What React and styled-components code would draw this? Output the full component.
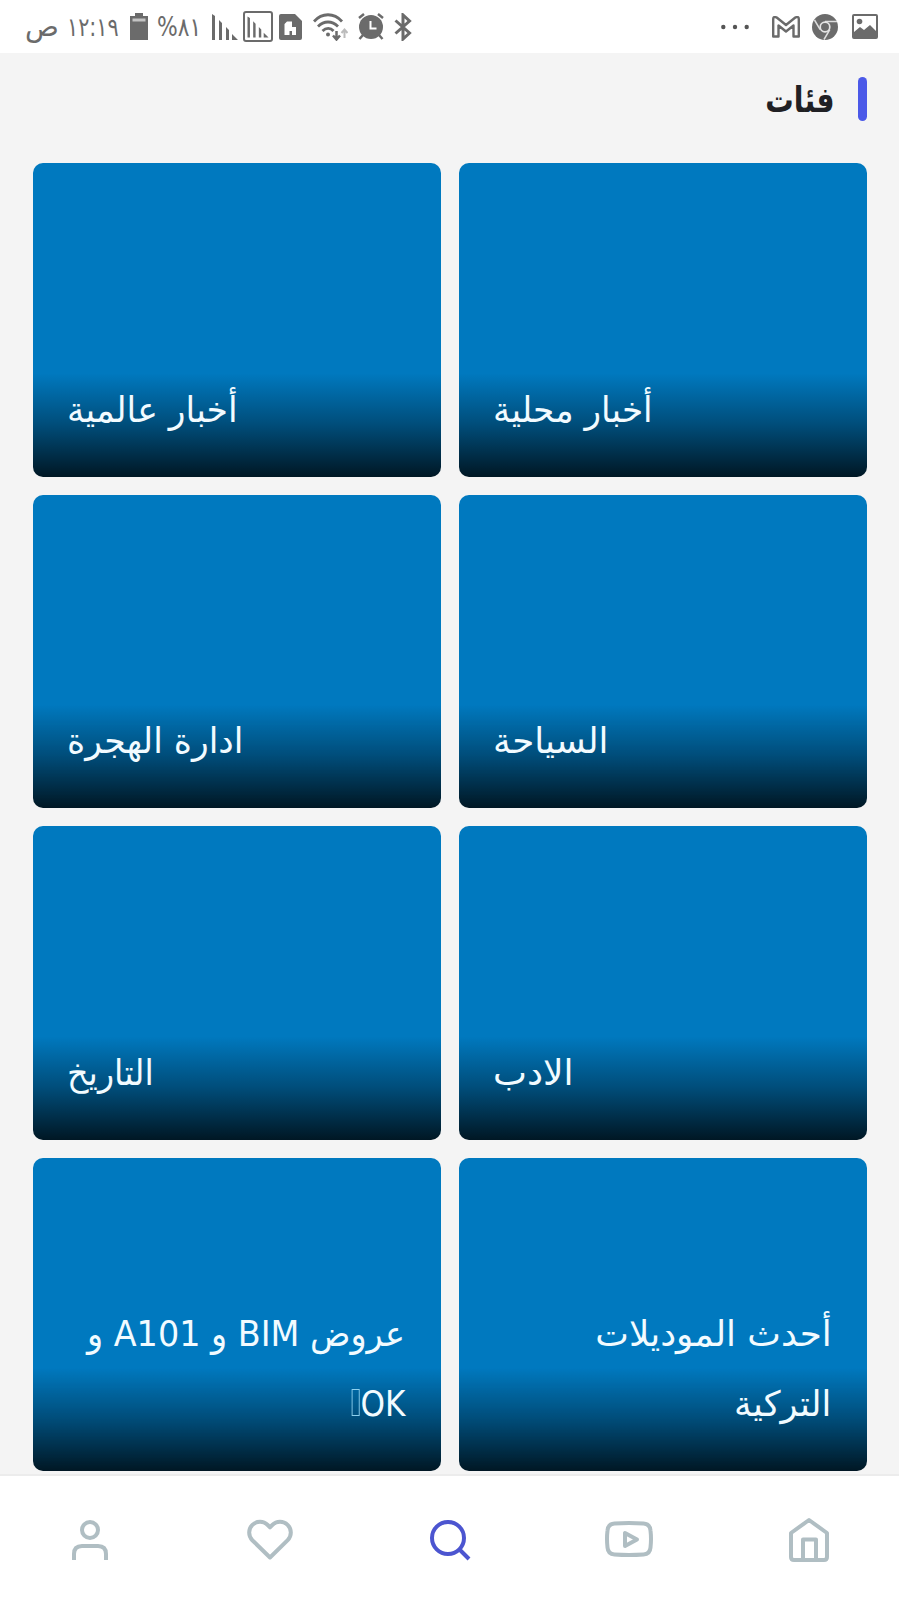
import styled, { createGlobalStyle } from "styled-components";

const colorGray = '#6b6b6b';
const colorBackground = '#f4f4f4';
const colorCard = '#0079bf';
const colorPrimary = '#4b59e8';
const colorActive = '#4c55d0';
const colorIcon = '#b0bec3';

const GlobalStyle = createGlobalStyle`
    * {
        box-sizing: border-box;
    }

    body {
        margin: 0;
        background: ${colorBackground};
        font-family: "DejaVu Sans", "Noto Sans", sans-serif;
    }
`;

const Screen = styled.div`
    display: flex;
    flex-direction: column;
    width: 899px;
    height: 1599px;
    overflow: hidden;
    background: ${colorBackground};
`;

const StatusBar = styled.header`
    display: flex;
    align-items: center;
    justify-content: space-between;
    flex: none;
    height: 53px;
    padding: 0 21px 0 25px;
    background: #fff;
    color: ${colorGray};
    direction: ltr;
`;

const StatusGroup = styled.div`
    display: flex;
    align-items: center;

    svg {
        display: block;
        flex: none;
    }
`;

const StatusItem = styled.div`
    display: flex;
    flex: none;
    width: ${({ $width }) => $width}px;
    height: 52px;
    align-items: center;
`;

const StatusText = styled.span`
    font-size: ${({ $size }) => $size}px;
    line-height: 52px;
    white-space: nowrap;
    transform: scaleX(${({ $stretch = 1 }) => $stretch});
    transform-origin: left center;
`;

const Content = styled.main`
    flex: 1;
    min-height: 0;
    padding: 0 32.5px;
    overflow: hidden;
`;

const Heading = styled.div`
    display: flex;
    align-items: center;
    gap: 23px;
    height: 110px;
    padding-bottom: 19px;
`;

const HeadingBar = styled.span`
    width: 9px;
    height: 44px;
    border-radius: 5px;
    background: ${colorPrimary};
`;

const HeadingTitle = styled.h1`
    margin: 0;
    padding-top: 2px;
    color: #202024;
    font-size: 35px;
    line-height: 44px;
    font-weight: 700;
    transform: scaleX(${({ $stretch }) => $stretch});
    transform-origin: right center;
`;

const Grid = styled.section`
    display: grid;
    grid-template-columns: 1fr 1fr;
    grid-auto-rows: 313.6px;
    gap: 18px;
`;

const Card = styled.article`
    display: flex;
    flex-direction: column;
    justify-content: flex-end;
    align-items: ${({ $wrapped }) => ($wrapped ? 'flex-start' : 'flex-end')};
    padding: 0 35px 32px 34px;
    border-radius: 10px;
    background: linear-gradient(180deg, transparent 67%, rgba(0, 21, 34, .43) 83%, #001724 100%), ${colorCard};
`;

const CardLine = styled.span`
    color: #f2fbff;
    font-size: 35px;
    line-height: 70px;
    height: 70px;
    white-space: nowrap;
    transform: scaleX(${({ $stretch }) => $stretch});
    transform-origin: ${({ $wrapped }) => ($wrapped ? 'right' : 'left')} center;
`;

const MissingGlyph = styled.span`
    display: inline-block;
    width: 9px;
    height: 27px;
    margin-right: 1px;
    border: 1px solid #8ed0ee;
    vertical-align: baseline;
`;

const NavBar = styled.nav`
    display: grid;
    grid-template-columns: repeat(5, 1fr);
    flex: none;
    height: 125px;
    padding-top: 40px;
    border-top: 2px solid #ececec;
    background: #fff;
`;

const NavButton = styled.a`
    display: flex;
    justify-content: center;
    color: ${({ $active }) => ($active ? colorActive : colorIcon)};

    svg {
        width: 48px;
        height: 48px;
        fill: none;
        stroke: currentColor;
        stroke-width: 4;
        stroke-linejoin: round;
    }
`;

const categories = [
    { lines: [{ text: 'أخبار محلية', stretch: .98 }] },
    { lines: [{ text: 'أخبار عالمية', stretch: .99 }] },
    { lines: [{ text: 'السياحة', stretch: 1.02 }] },
    { lines: [{ text: 'ادارة الهجرة', stretch: .99 }] },
    { lines: [{ text: 'الادب', stretch: 1.03 }] },
    { lines: [{ text: 'التاريخ', stretch: .955 }] },
    { lines: [{ text: 'أحدث الموديلات', stretch: 1.02 }, { text: 'التركية', stretch: 1.01 }] },
    { lines: [{ text: 'عروض BIM و A101 و', stretch: .955 }, { text: 'OK', stretch: .89, missing: true }] },
];

const BatteryIcon = () => (
    <svg width="18" height="27" viewBox="0 0 18 27">
        <path d="M5 0h8v3h5v24H0V3h5z" fill={colorGray} />
        <path d="M2.5 5.5h13v3h-13z" fill="#c4c4c4" />
    </svg>
);

const Bars = () => (
    <g fill={colorGray}>
        <path d="M0 0l3 2v24H0zM7 6l3 3v17H7zM14 13l3 3v10h-3zM20 20l6 6h-6z" />
    </g>
);

const SignalIcon = () => (
    <svg width="26" height="26" viewBox="0 0 26 26"><Bars /></svg>
);

const SignalBoxIcon = () => (
    <svg width="30" height="31" viewBox="0 0 30 31">
        <rect x="1" y="1" width="28" height="29" rx="2" fill="none" stroke={colorGray} strokeWidth="2" />
        <g transform="translate(4.5 5.5) scale(.81)"><Bars /></g>
    </svg>
);

const SimIcon = () => (
    <svg width="23" height="26" viewBox="0 0 23 26">
        <path d="M2 0h14l7 7v17a2 2 0 0 1-2 2H2a2 2 0 0 1-2-2V2a2 2 0 0 1 2-2z" fill={colorGray} />
        <path d="M5.500 21V10L8 7.500h5V13h4v8h-4v-4h-2.500v4z" fill="#fff" />
    </svg>
);

const WifiIcon = () => (
    <svg width="35" height="28" viewBox="0 0 35 28" fill="none" stroke={colorGray} strokeWidth="2.8">
        <path d="M1 8.500C9-.5 21-.5 29 8.500M5 13.500c6-6 14-6 20 0M9.500 18c3.500-3.500 8-3.500 11 0" />
        <circle cx="15" cy="21.500" r="2" fill={colorGray} stroke="none" />
        <path d="M23.500 18v8M20 22.500l3.500 4 3.500-4" strokeWidth="2.500" />
        <path d="M31.500 25v-8M28.500 20l3-3.500 3 3.500" stroke="#bcbcbc" strokeWidth="2" />
    </svg>
);

const AlarmIcon = () => (
    <svg width="26" height="27" viewBox="0 0 26 27" fill="none" stroke={colorGray} strokeWidth="2.500">
        <circle cx="13" cy="14" r="12" fill={colorGray} stroke="none" />
        <path d="M1 5l5-4M25 5l-5-4M5 22l-3.500 4M21 22l3.500 4" />
        <path d="M12.500 8v7.500h6" stroke="#fff" strokeWidth="2" />
    </svg>
);

const BluetoothIcon = () => (
    <svg width="18" height="28" viewBox="0 0 18 28" fill="none" stroke={colorGray} strokeWidth="3">
        <path d="M1.500 7.500L15.500 20 9 26V2l6.500 6L1.500 20.500" />
    </svg>
);

const MailIcon = () => (
    <svg width="28" height="22" viewBox="0 0 28 22" fill="none" stroke={colorGray} strokeWidth="2.400" strokeLinejoin="round">
        <path d="M1.200 20.500V3q0-3 3.500-1.500L14 9l9.300-7.500Q26.800 0 26.800 3v17.500h-5.300V9.500L14 15.500 6.500 9.500v11z" />
    </svg>
);

const ChromeIcon = () => (
    <svg width="26" height="26" viewBox="0 0 26 26" fill="none">
        <circle cx="13" cy="13" r="13" fill={colorGray} />
        <path d="M13 7.500h12M8.200 15.700L2.500 6M17.800 15.700L12 25.500" stroke="#dedede" strokeWidth="1.500" />
        <circle cx="13" cy="13" r="4.800" fill={colorGray} stroke="#e4e4e4" strokeWidth="1.700" />
    </svg>
);

const ImageIcon = () => (
    <svg width="26" height="25" viewBox="0 0 26 25">
        <path fillRule="evenodd" d="M2 0h22a2 2 0 0 1 2 2v21a2 2 0 0 1-2 2H2a2 2 0 0 1-2-2V2a2 2 0 0 1 2-2zM2 2v16l6-5 4 3 6-5 6 6V2z" fill={colorGray} />
        <circle cx="7.500" cy="7.500" r="2.800" fill={colorGray} />
    </svg>
);

const DotsIcon = () => (
    <svg width="28" height="6" viewBox="0 0 28 6" fill="#555">
        <circle cx="2.300" cy="3" r="2.200" />
        <circle cx="14" cy="3" r="2.200" />
        <circle cx="25.700" cy="3" r="2.200" />
    </svg>
);

const HomeIcon = () => (
    <svg viewBox="0 0 48 48">
        <path d="M6 17L24 4l18 13v24q0 3-3 3H9q-3 0-3-3zM18 44V23.500h13V44" />
    </svg>
);

const VideoIcon = () => (
    <svg viewBox="0 0 48 48">
        <path d="M9.500 7.500Q24 6.500 38.500 7.500 45 8 45.500 14.500q1 8.500 0 17Q45 38 38.500 38.500 24 39.500 9.500 38.500 3 38 2.500 31.500q-1-8.500 0-17Q3 8 9.500 7.500z" />
        <path d="M20 17v13l12-6.500z" />
    </svg>
);

const SearchIcon = () => (
    <svg viewBox="0 0 48 48">
        <circle cx="22" cy="22" r="16" />
        <path d="M33.500 33.500l9.500 9.500" />
    </svg>
);

const HeartIcon = () => (
    <svg viewBox="0 0 48 48">
        <path d="M24 41.500L6.300 24.200A10.800 10.800 0 0 1 21.700 9L24 11.300 26.300 9A10.800 10.800 0 0 1 41.700 24.200z" />
    </svg>
);

const UserIcon = () => (
    <svg viewBox="0 0 48 48">
        <circle cx="24" cy="14" r="8" />
        <path d="M8 44v-6q0-8 8-8h16q8 0 8 8v6" />
    </svg>
);

const App = () => {
    return (
        <Screen dir="rtl" lang="ar">
            <GlobalStyle />
            <StatusBar>
                <StatusGroup>
                    <StatusItem $width={42}><StatusText $size={28}>ص</StatusText></StatusItem>
                    <StatusItem $width={62.5}><StatusText $size={26} $stretch={.8}>١٢:١٩</StatusText></StatusItem>
                    <StatusItem $width={27}><BatteryIcon /></StatusItem>
                    <StatusItem $width={55}><StatusText $size={26} $stretch={.84}>%٨١</StatusText></StatusItem>
                    <StatusItem $width={31}><SignalIcon /></StatusItem>
                    <StatusItem $width={36}><SignalBoxIcon /></StatusItem>
                    <StatusItem $width={34}><SimIcon /></StatusItem>
                    <StatusItem $width={45.5}><WifiIcon /></StatusItem>
                    <StatusItem $width={36}><AlarmIcon /></StatusItem>
                    <StatusItem $width={18}><BluetoothIcon /></StatusItem>
                </StatusGroup>
                <StatusGroup>
                    <StatusItem $width={51}><DotsIcon /></StatusItem>
                    <StatusItem $width={40}><MailIcon /></StatusItem>
                    <StatusItem $width={40}><ChromeIcon /></StatusItem>
                    <StatusItem $width={26}><ImageIcon /></StatusItem>
                </StatusGroup>
            </StatusBar>
            <Content>
                <Heading>
                    <HeadingBar />
                    <HeadingTitle $stretch={.81}>فئات</HeadingTitle>
                </Heading>
                <Grid>
                    {categories.map(({ lines }) => (
                        <Card key={lines[0].text} $wrapped={lines.length > 1}>
                            {lines.map(({ text, stretch, missing }) => (
                                <CardLine key={text} $stretch={stretch} $wrapped={lines.length > 1}>
                                    {text}{missing && <MissingGlyph />}
                                </CardLine>
                            ))}
                        </Card>
                    ))}
                </Grid>
            </Content>
            <NavBar>
                <NavButton><HomeIcon /></NavButton>
                <NavButton><VideoIcon /></NavButton>
                <NavButton $active><SearchIcon /></NavButton>
                <NavButton><HeartIcon /></NavButton>
                <NavButton><UserIcon /></NavButton>
            </NavBar>
        </Screen>
    );
}

export default App;
